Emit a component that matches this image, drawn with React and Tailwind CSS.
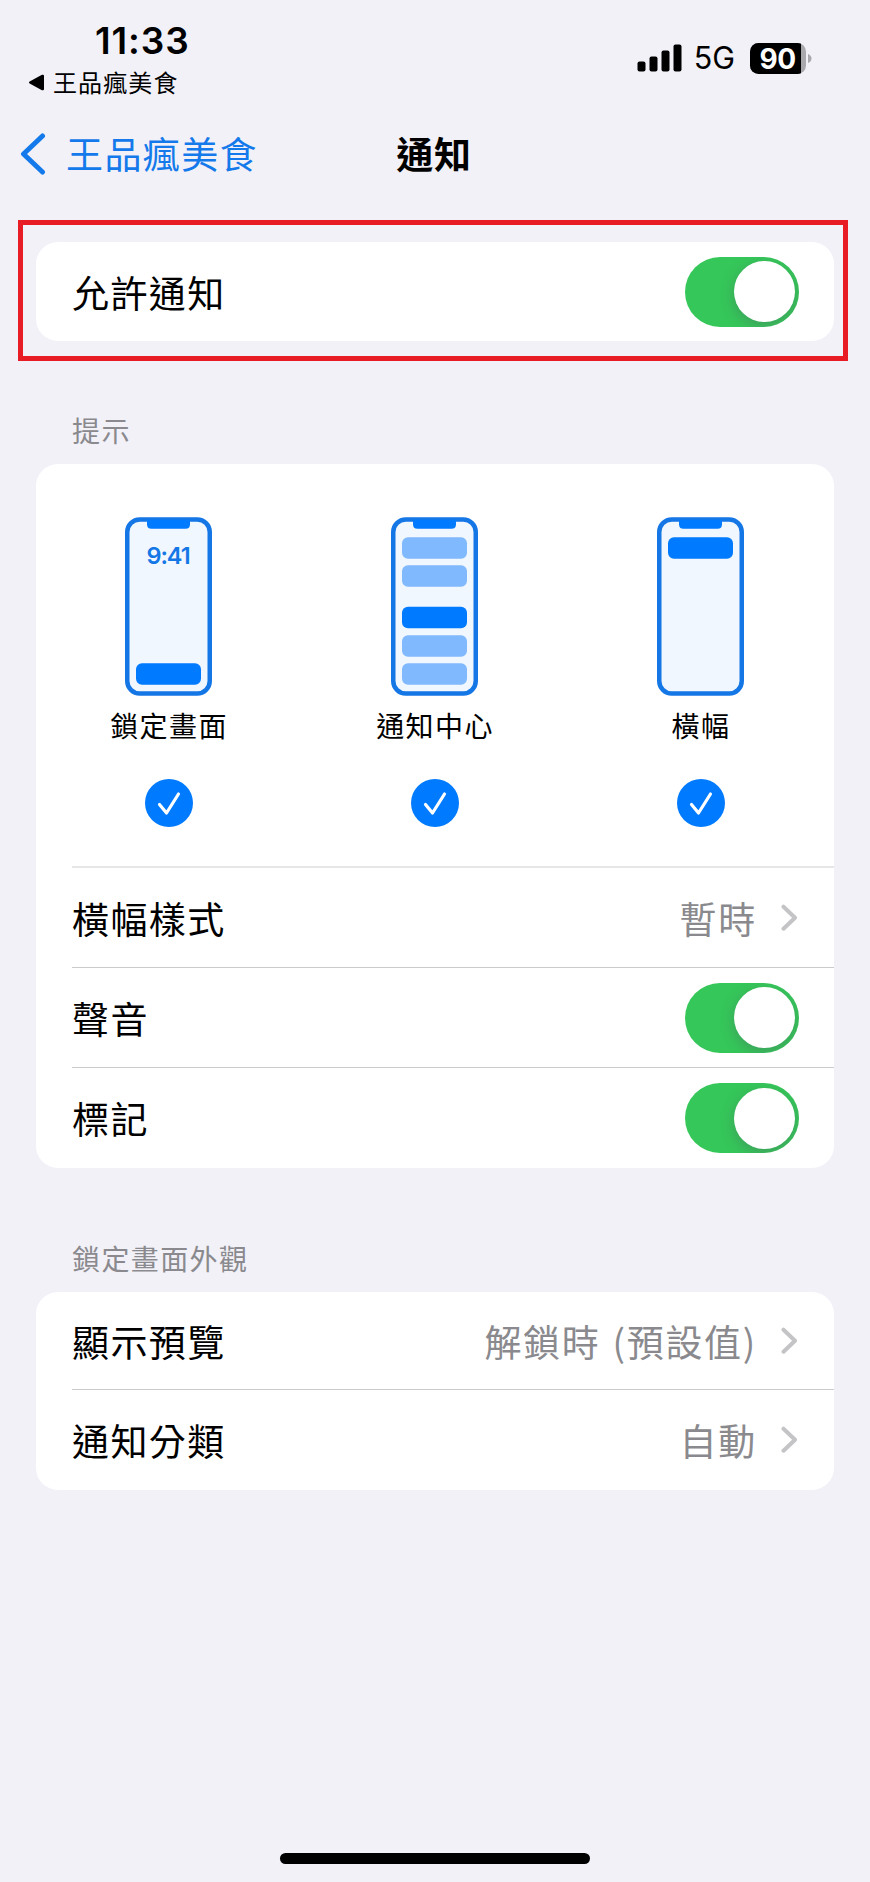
import { useState } from "react";

const ChevronRight = () => (
  <svg width="18" height="28" viewBox="0 0 18 28" fill="none">
    <path d="M2.5 2.7 L14 13.7 L2.5 24.7" stroke="#c4c4c7" strokeWidth="4" strokeLinecap="round" strokeLinejoin="round" />
  </svg>
);

const Toggle = ({ defaultOn = true }) => {
  const [on, setOn] = useState(defaultOn);

  return (
    <button
      type="button"
      role="switch"
      aria-checked={on}
      onClick={() => setOn(!on)}
      className={`flex h-[70px] w-[114px] items-center overflow-hidden rounded-full p-[4.5px] ${
        on ? "justify-end bg-[#35c759]" : "justify-start bg-[#e9e9ea]"
      }`}
    >
      <span className="h-[61px] w-[61px] rounded-full bg-white shadow-[0_4px_14px_rgba(80,80,100,0.35)]" />
    </button>
  );
};

const Phone = ({ children }) => (
  <svg width="88" height="180" viewBox="0.5 0.3 88 180">
    <rect x="2.75" y="2.75" width="82.5" height="174" rx="12.5" fill="#f0f7ff" stroke="#1577e6" strokeWidth="4.5" />
    <path d="M22.5 3 H65.5 V7.5 Q65.5 12 61 12 H27 Q22.5 12 22.5 7.5 Z" fill="#007aff" />
    {children}
  </svg>
);

const Bar = ({ y, light }) => (
  <rect x="11.5" y={y} width="65" height="21.5" rx="6" fill={light ? "#80b9fe" : "#007aff"} />
);

const alerts = [
  {
    label: "鎖定畫面",
    art: (
      <Phone>
        <text x="43.5" y="47" textAnchor="middle" fill="#1577e6" className="font-['Inter'] text-[23.5px] font-semibold tracking-[-1.1px]">
          9:41
        </text>
        <Bar y={146.5} />
      </Phone>
    ),
  },
  {
    label: "通知中心",
    art: (
      <Phone>
        <Bar y={20.5} light />
        <Bar y={48.5} light />
        <Bar y={90} />
        <Bar y={118.5} light />
        <Bar y={146.5} light />
      </Phone>
    ),
  },
  {
    label: "橫幅",
    art: (
      <Phone>
        <Bar y={20.5} />
      </Phone>
    ),
  },
];

const AlertOption = ({ label, art }) => {
  const [checked, setChecked] = useState(true);

  return (
    <div className="flex flex-1 flex-col items-center pt-[53px]" onClick={() => setChecked(!checked)}>
      {art}
      <span className="mt-2 text-[28px] leading-[40px] tracking-[1.4px]">{label}</span>
      <svg className="mt-[34px]" width="48" height="48" viewBox="0 0 48 48" fill="none">
        <circle cx="24" cy="24" r="24" fill={checked ? "#007aff" : "#d1d1d6"} />
        <path d="M14.5 25.5 L21.5 34 L33.5 15" stroke="white" strokeWidth="3.2" strokeLinecap="round" strokeLinejoin="round" />
      </svg>
    </div>
  );
};

const Row = ({ label, value, toggle, className = "" }) => (
  <div className={`ml-9 flex items-center justify-between pr-[35px] ${className}`}>
    <span className="text-[37px] leading-[52px] tracking-[1.4px]">{label}</span>
    {toggle ? (
      <Toggle />
    ) : (
      <div className="flex items-center gap-6">
        <span className="text-[37px] leading-[52px] tracking-[1.7px] text-[#8a8a8e]">{value}</span>
        <ChevronRight />
      </div>
    )}
  </div>
);

const StatusBar = () => (
  <header className="flex h-[104px] justify-between pl-7 pr-[58px] pt-[18px]">
    <div className="flex flex-col">
      <span className="ml-[67px] font-['Inter'] text-[37px] font-semibold leading-[45px] tracking-[0.9px]">11:33</span>
      <div className="flex items-center gap-[8px]">
        <svg width="17" height="17" viewBox="0 0 17 17">
          <path d="M1.6 7.4 L14 0.8 Q16 0.2 16 2 V15 Q16 16.8 14 16.2 L1.6 9.6 Q0.2 8.5 1.6 7.4 Z" fill="black" />
        </svg>
        <span className="text-[24px] leading-[38px] tracking-[1.1px]">王品瘋美食</span>
      </div>
    </div>
    <div className="mt-6 flex h-8 items-center">
      <svg width="45" height="28" viewBox="0 0 45 28">
        <rect x="0.5" y="17.5" width="8" height="10" rx="2" />
        <rect x="12.5" y="12.5" width="8" height="15" rx="2" />
        <rect x="24.5" y="6.5" width="8" height="21" rx="2" />
        <rect x="36.5" y="0.5" width="8" height="27" rx="2" />
      </svg>
      <span className="ml-[12px] font-['Inter'] text-[30.5px] leading-8">5G</span>
      <svg className="ml-[15px]" width="62" height="31" viewBox="0 0 62 31">
        <defs>
          <clipPath id="level">
            <rect width="51" height="31" />
          </clipPath>
        </defs>
        <rect width="56" height="31" rx="8.5" fill="#a9a9ad" />
        <rect width="56" height="31" rx="8.5" clipPath="url(#level)" />
        <path d="M58 11 Q61.5 12.5 61.5 15.5 Q61.5 18.5 58 20 Z" fill="#a9a9ad" />
        <text x="27.5" y="25.5" textAnchor="middle" fill="white" className="font-['Inter'] text-[28px] font-bold tracking-[-0.5px]">
          90
        </text>
      </svg>
    </div>
  </header>
);

const App = () => {
  return (
    <div
      lang="zh-Hant"
      className="flex h-[1882px] w-[870px] flex-col bg-[#f2f1f8] font-['Noto_Sans_CJK_TC',sans-serif] text-black"
    >
      <StatusBar />

      <nav className="grid h-[100px] grid-cols-3 items-center px-5">
        <div className="flex items-center gap-5 whitespace-nowrap text-[#1479ea]">
          <svg width="26" height="42" viewBox="0.5 0 26 42" fill="none">
            <path d="M23 3 L4 21 L23 39" stroke="currentColor" strokeWidth="5" strokeLinecap="round" strokeLinejoin="round" />
          </svg>
          <span className="pb-[3px] text-[37px] leading-[52px] tracking-[1.4px]">王品瘋美食</span>
        </div>
        <h1 className="pb-[3px] pr-[2px] text-center text-[37px] font-bold leading-[52px] tracking-[0.8px]">通知</h1>
      </nav>

      {/* Highlighted master switch */}
      <section className="ml-[18px] mt-4 h-[141px] w-[830px] border-[5px] border-[#e81c24] px-[13px] pt-[17px]">
        <div className="w-[798px] rounded-[22px] bg-white">
          <Row label="允許通知" toggle className="h-[99px]" />
        </div>
      </section>

      <h2 className="ml-[72px] mt-[49px] text-[28px] leading-[40px] tracking-[1.4px] text-[#8a8a8e]">提示</h2>
      <section className="mx-9 mt-[14px] h-[704px] rounded-[22px] bg-white">
        <div className="flex h-[402px]">
          {alerts.map((alert) => (
            <AlertOption key={alert.label} {...alert} />
          ))}
        </div>
        <div className="ml-9 h-0.5 bg-[#e6e6e8]" />
        <Row label="橫幅樣式" value="暫時" className="h-[99px]" />
        <div className="ml-9 h-px bg-[#cbcbce]" />
        <Row label="聲音" toggle className="h-[99px]" />
        <div className="ml-9 h-px bg-[#cbcbce]" />
        <Row label="標記" toggle className="h-[100px]" />
      </section>

      <h2 className="ml-[72px] mt-[70px] text-[28px] leading-[40px] tracking-[1.4px] text-[#8a8a8e]">鎖定畫面外觀</h2>
      <section className="mx-9 mt-[14px] h-[198px] rounded-[22px] bg-white">
        <Row
          label="顯示預覽"
          value={<>解鎖時 <span className="ml-[2px]">(</span>預設值)</>}
          className="h-[97px]"
        />
        <div className="ml-9 h-px bg-[#cbcbce]" />
        <Row label="通知分類" value="自動" className="h-[100px]" />
      </section>

      <div className="mx-auto mb-[18px] mt-auto h-[11px] w-[310px] rounded-full bg-black" />
    </div>
  );
};

export default App;
